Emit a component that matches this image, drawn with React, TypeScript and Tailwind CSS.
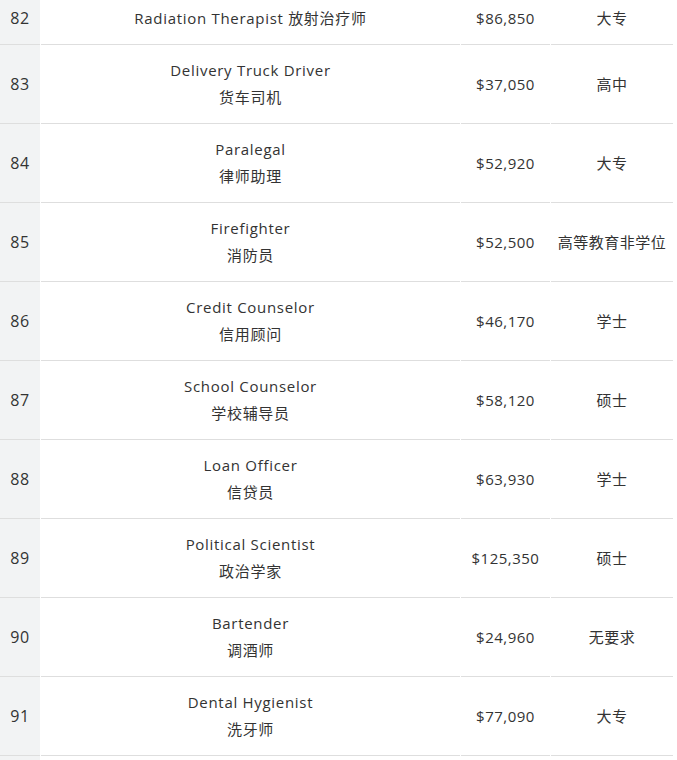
type Job = {
  rank: number
  en: string
  zh: string
  salary: string
  edu: string
  inline?: boolean
}

const jobs: Job[] = [
  { rank: 82, en: 'Radiation Therapist', zh: '放射治疗师', salary: '$86,850', edu: '大专', inline: true },
  { rank: 83, en: 'Delivery Truck Driver', zh: '货车司机', salary: '$37,050', edu: '高中' },
  { rank: 84, en: 'Paralegal', zh: '律师助理', salary: '$52,920', edu: '大专' },
  { rank: 85, en: 'Firefighter', zh: '消防员', salary: '$52,500', edu: '高等教育非学位' },
  { rank: 86, en: 'Credit Counselor', zh: '信用顾问', salary: '$46,170', edu: '学士' },
  { rank: 87, en: 'School Counselor', zh: '学校辅导员', salary: '$58,120', edu: '硕士' },
  { rank: 88, en: 'Loan Officer', zh: '信贷员', salary: '$63,930', edu: '学士' },
  { rank: 89, en: 'Political Scientist', zh: '政治学家', salary: '$125,350', edu: '硕士' },
  { rank: 90, en: 'Bartender', zh: '调酒师', salary: '$24,960', edu: '无要求' },
  { rank: 91, en: 'Dental Hygienist', zh: '洗牙师', salary: '$77,090', edu: '大专' },
  { rank: 92, en: 'Medical Assistant', zh: '医疗助理', salary: '$33,610', edu: '高等教育非学位' },
]

const cell = 'flex items-center justify-center border-b border-[#dedede] text-center'

export default function App() {
  return (
    <div className="h-[760px] w-[677px] overflow-hidden bg-white font-['Open_Sans','Noto_Sans_CJK_SC',sans-serif] text-[15px] leading-[27px] tracking-[0.5px] text-[#333]">
      <div className="-mt-[7px] grid w-[673px] grid-cols-[40px_419px_89px_122px] gap-x-px">
        {jobs.map((job) => (
          <div key={job.rank} className="contents">
            <div className={`${cell} bg-[#f2f3f4] text-[16px] ${job.inline ? 'h-[52px]' : 'h-[79px]'}`}>
              {job.rank}
            </div>
            <div className={`${cell} flex-col tracking-[0.7px]`}>
              {job.inline ? (
                <span>
                  {job.en} {job.zh}
                </span>
              ) : (
                <>
                  <span>{job.en}</span>
                  <span>{job.zh}</span>
                </>
              )}
            </div>
            <div className={cell}>{job.salary}</div>
            <div className={cell}>{job.edu}</div>
          </div>
        ))}
      </div>
    </div>
  )
}
